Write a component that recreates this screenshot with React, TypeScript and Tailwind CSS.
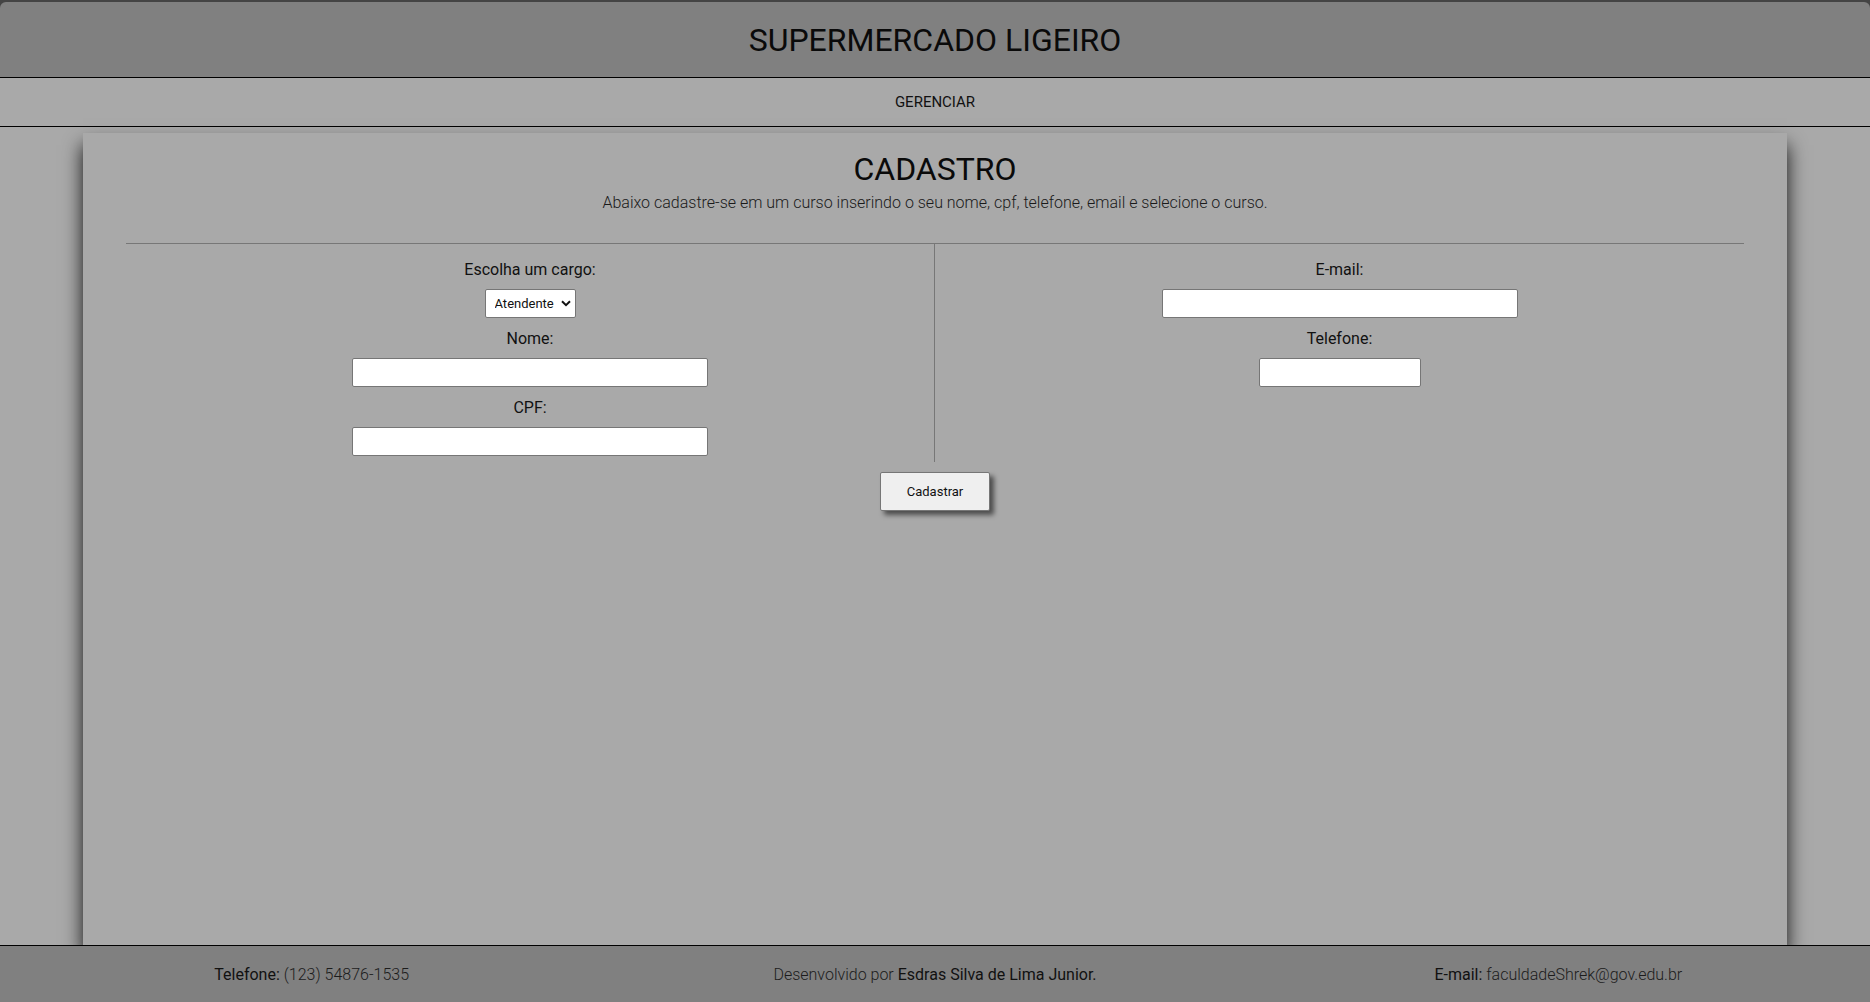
import { useState } from "react";

const font = "font-['Roboto','Liberation_Sans',sans-serif]";

function Field({ label, className }: { label: string; className: string }) {
  return (
    <div className="flex flex-col items-center gap-[10px]">
      <label className="h-[19px] text-[16px] leading-[19px] text-[#111]">{label}</label>
      <input
        type="text"
        className={`h-[29px] border border-[#767676] bg-white rounded-[2px] ${className}`}
      />
    </div>
  );
}

export default function App() {
  const [cargo, setCargo] = useState("Atendente");

  return (
    <div className={`min-h-screen flex flex-col bg-[#a9a9a9] ${font}`}>
      <div className="bg-[#444] pt-[2px]">
        <header className="h-[75px] bg-[#808080] rounded-t-[6px] border-b border-black flex items-center justify-center box-content">
          <h1 className="text-[32px] text-[#0a0a0a] leading-none">SUPERMERCADO LIGEIRO</h1>
        </header>
      </div>

      <nav className="h-[48px] bg-[#a9a9a9] border-b border-black flex items-center justify-center box-content">
        <a className="text-[15px] text-[#111] uppercase">GERENCIAR</a>
      </nav>

      <main className="flex-1 flex flex-col pt-[6px]">
        <section className="flex-1 mx-[83px] px-[43px] pt-[18px] bg-[#a9a9a9] shadow-[0_12px_18px_rgba(0,0,0,0.9)]">
          <div className="flex flex-col items-center">
            <h2 className="text-[32px] leading-[37px] text-[#0a0a0a]">CADASTRO</h2>
            <p className="mt-[5px] text-[16px] leading-[19px] font-light text-[#1a1a1a]">
              Abaixo cadastre-se em um curso inserindo o seu nome, cpf, telefone, email e selecione o curso.
            </p>
          </div>

          <div className="mt-[31px] border-t border-[#777] grid grid-cols-2">
            <div className="border-r border-[#777] pt-[16px] pb-[6px] flex flex-col gap-[11px]">
              <div className="flex flex-col items-center gap-[10px]">
                <label className="h-[19px] text-[16px] leading-[19px] text-[#111]">Escolha um cargo:</label>
                <div className="relative">
                  <select
                    value={cargo}
                    onChange={(e) => setCargo(e.target.value)}
                    className="appearance-none w-[91px] h-[29px] pl-[9px] pr-[20px] bg-white border border-[#767676] rounded-[2px] text-[13px] text-[#111]"
                  >
                    <option>Atendente</option>
                    <option>Gerente</option>
                    <option>Caixa</option>
                    <option>Repositor</option>
                  </select>
                  <svg
                    className="pointer-events-none absolute right-[5px] top-[11px]"
                    width="10"
                    height="7"
                    viewBox="0 0 10 7"
                  >
                    <path d="M1 1.2 L5 5.2 L9 1.2" fill="none" stroke="#111" strokeWidth="2" />
                  </svg>
                </div>
              </div>
              <Field label="Nome:" className="w-[356px]" />
              <Field label="CPF:" className="w-[356px]" />
            </div>

            <div className="pt-[16px] flex flex-col gap-[11px]">
              <Field label="E-mail:" className="w-[356px]" />
              <Field label="Telefone:" className="w-[162px]" />
            </div>
          </div>

          <div className="flex justify-center mt-[10px]">
            <button className="w-[110px] h-[39px] bg-[#efefef] border border-[#767676] rounded-[2px] text-[13px] text-[#111] shadow-[4px_4px_5px_rgba(0,0,0,0.55)]">
              Cadastrar
            </button>
          </div>
        </section>
      </main>

      <footer className="h-[54px] pt-[2px] bg-[#808080] border-t border-black grid grid-cols-3 items-center box-content text-[16px]">
        <p className="text-center">
          <span className="text-[#111]">Telefone:</span>{" "}
          <span className="font-light text-[#1c1c1c]">(123) 54876-1535</span>
        </p>
        <p className="text-center">
          <span className="font-light text-[#1c1c1c]">Desenvolvido por</span>{" "}
          <span className="text-[#111]">Esdras Silva de Lima Junior.</span>
        </p>
        <p className="text-center">
          <span className="text-[#111]">E-mail:</span>{" "}
          <span className="font-light text-[#1c1c1c]">faculdadeShrek@gov.edu.br</span>
        </p>
      </footer>
    </div>
  );
}
